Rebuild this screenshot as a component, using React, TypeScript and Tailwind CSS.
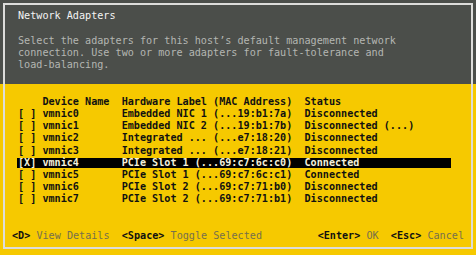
const ROWS = [
  { sel: false, dev: 'vmnic0', hw: 'Embedded NIC 1 (...19:b1:7a)', status: 'Disconnected' },
  { sel: false, dev: 'vmnic1', hw: 'Embedded NIC 2 (...19:b1:7b)', status: 'Disconnected (...)' },
  { sel: false, dev: 'vmnic2', hw: 'Integrated ... (...e7:18:20)', status: 'Disconnected' },
  { sel: false, dev: 'vmnic3', hw: 'Integrated ... (...e7:18:21)', status: 'Disconnected' },
  { sel: true, dev: 'vmnic4', hw: 'PCIe Slot 1 (...69:c7:6c:c0)', status: 'Connected' },
  { sel: false, dev: 'vmnic5', hw: 'PCIe Slot 1 (...69:c7:6c:c1)', status: 'Connected' },
  { sel: false, dev: 'vmnic6', hw: 'PCIe Slot 2 (...69:c7:71:b0)', status: 'Disconnected' },
  { sel: false, dev: 'vmnic7', hw: 'PCIe Slot 2 (...69:c7:71:b1)', status: 'Disconnected' },
];

const pad = (s: string, n: number) => s + ' '.repeat(Math.max(0, n - s.length));

function Row({ sel, dev, hw, status }: (typeof ROWS)[number]) {
  const line = `${sel ? '[X]' : '[ ]'} ${pad(dev, 13)}${pad(hw, 30)}${status}`;
  return (
    <div className="h-[12.15px] flex items-center">
      {sel ? (
        <span className="-ml-px pl-px w-[434px] h-[10px] leading-[10px] bg-black text-[#f4f0dc] whitespace-pre">
          {line}
        </span>
      ) : (
        <span className="whitespace-pre">{line}</span>
      )}
    </div>
  );
}

function Key({ k, label }: { k: string; label: string }) {
  return (
    <>
      <span className="font-bold text-[#111]">{k}</span>
      <span className="text-[#77704c]"> {label}</span>
    </>
  );
}

export default function App() {
  return (
    <div
      className="w-[476px] h-[255px] p-[3px] pb-[6px] bg-[linear-gradient(to_bottom,#4b4e4a_84px,#f6c900_84px)] overflow-hidden"
      style={{ fontFamily: '"DejaVu Sans Mono", "Liberation Mono", monospace' }}
    >
      <div className="h-full border-2 border-[#dcdcda] flex flex-col text-[10.13px] leading-[12.2px]">
        <div className="h-[79px] shrink-0 pt-[5px] pl-[13px]">
          <div className="text-[#f4f4f4]">Network Adapters</div>
          <div className="mt-[12.8px] text-[#b4b6b2] whitespace-pre">
            <div>Select the adapters for this host’s default management network</div>
            <div>connection. Use two or more adapters for fault-tolerance and</div>
            <div>load-balancing.</div>
          </div>
        </div>

        <div className="flex-1 flex flex-col pt-[12px] pl-[13px] font-bold text-[#111]">
          <div className="h-[12.15px] flex items-center whitespace-pre">
            {'    Device Name  Hardware Label (MAC Address)  Status'}
          </div>
          {ROWS.map((r) => (
            <Row key={r.dev} {...r} />
          ))}
        </div>

        <div className="flex justify-between pl-[7px] pr-[7px] pb-[5px] whitespace-pre">
          <div>
            <Key k="<D>" label="View Details" />
            {'  '}
            <Key k="<Space>" label="Toggle Selected" />
          </div>
          <div>
            <Key k="<Enter>" label="OK" />
            {'  '}
            <Key k="<Esc>" label="Cancel" />
          </div>
        </div>
      </div>
    </div>
  );
}
